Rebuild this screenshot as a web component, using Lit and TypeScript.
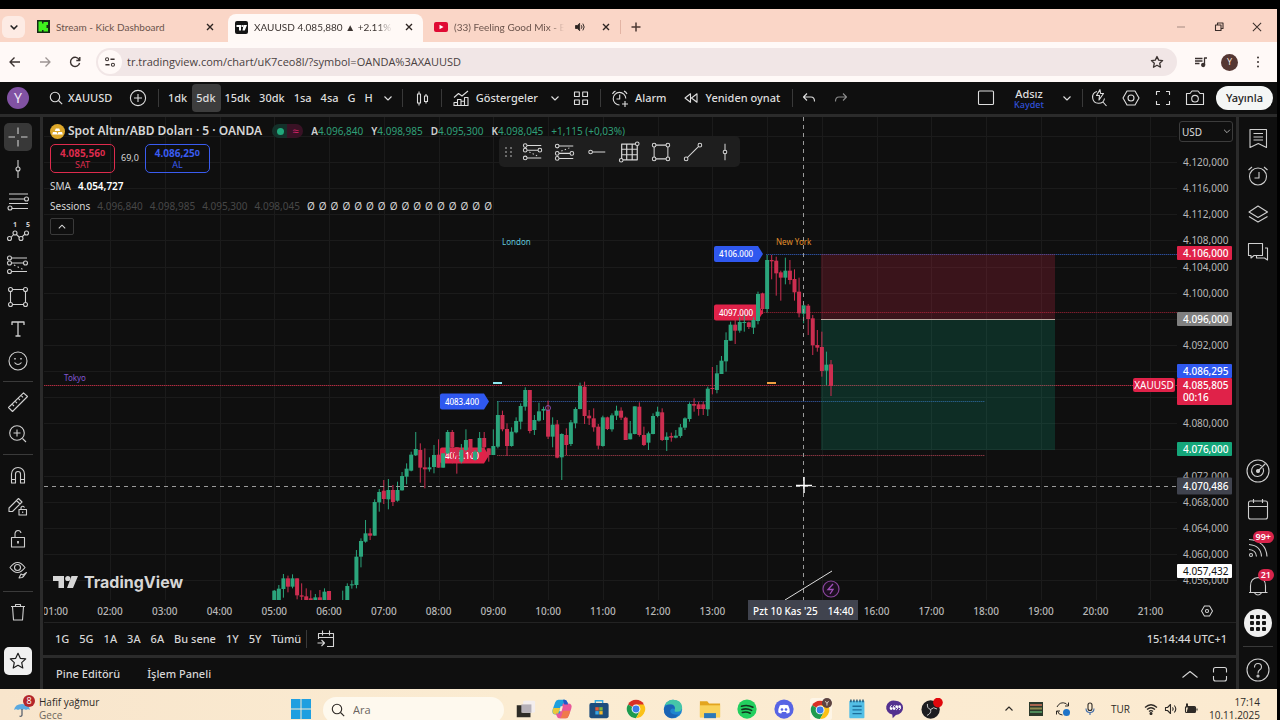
import { LitElement, html, svg, css, nothing } from "lit";
import { customElement } from "lit/decorators.js";
import { classMap } from "lit/directives/class-map.js";
import { styleMap } from "lit/directives/style-map.js";

/* ---------- icons: drawn on a 24px grid ---------- */
const ring = (x: number, y: number, r = 2) => svg`<circle cx=${x} cy=${y} r=${r} fill="var(--knock, #0f0f0f)"/>`;

const icons: Record<string, unknown> = {
  down: svg`<path d="M8.500 10.500 12 14l3.500-3.500"/>`,
  downBold: svg`<path d="M7.500 10 12 14.500l4.500-4.500" stroke-width="2"/>`,
  up: svg`<path d="M8.500 13.500 12 10l3.500 3.500"/>`,
  close: svg`<path d="m8 8 8 8M16 8l-8 8" stroke-width="1.800"/>`,
  closeThin: svg`<path d="m7.500 7.500 9 9M16.500 7.500l-9 9"/>`,
  plus: svg`<path d="M12 7.500v9M7.500 12h9" stroke-width="1.500"/>`,
  minimize: svg`<path d="M8 12h8" opacity=".4"/>`,
  restore: svg`<path d="M8.500 10h5.500v5.500H8.500zM10.500 9.800V8H16v5.500h-1.800"/>`,
  sound: svg`<path d="M6 10v4h2.500l3 3V7l-3 3z" fill="currentColor"/><path d="M13.800 9.700q1.800 2.300 0 4.600M15.800 7.500q3.500 4.500 0 9" stroke-width="1.300"/>`,
  back: svg`<path d="M17 12H7m4.500-4.500L7 12l4.500 4.500" stroke-width="1.400"/>`,
  forward: svg`<path d="M7 12h10m-4.500-4.500L17 12l-4.500 4.500" stroke-width="1.300" opacity=".5"/>`,
  reload: svg`<path d="M16.300 10A4.600 4.600 0 1 0 16.600 13M16.800 7v3.500h-3.500" stroke-width="1.400"/>`,
  site: svg`<circle cx="8.800" cy="9" r="1.700"/><circle cx="15.200" cy="15" r="1.700"/><path d="M12.500 9H17M7 15h4.500" stroke-width="1.400"/>`,
  star: svg`<path d="m12 6.500 1.700 3.600 3.900.5-2.900 2.700.8 3.900-3.500-1.900-3.500 1.900.8-3.900-2.900-2.700 3.900-.5z" stroke-width="1.300"/>`,
  media: svg`<path d="M6 8.500h7.500M6 11h7.500M6 13.500h4.500M15.500 15V8H18" stroke-width="1.300"/><circle cx="14.200" cy="15" r="1.600" fill="currentColor"/>`,
  dots: svg`<g fill="currentColor" stroke="none"><circle cx="12" cy="7.500" r="1"/><circle cx="12" cy="12" r="1"/><circle cx="12" cy="16.500" r="1"/></g>`,
  search: svg`<circle cx="11" cy="11" r="4.700"/><path d="m14.500 14.500 3.700 3.700"/>`,
  addCircle: svg`<circle cx="12" cy="12" r="7.600"/><path d="M12 8v8M8 12h8"/>`,
  candles: svg`<path d="M7.500 8h3v9h-3zM9 5.500V8m0 9v2.500M14.500 10h3v5.500h-3zM16 8v2m0 5.500v2"/>`,
  indicators: svg`<path d="M5 19.500v-3h3.500v3M8.500 19.500v-6H12v6M12 19.500v-4.200h3.500v4.200M15.500 19.500v-8H19v8M4.500 19.500h15M5 11.500l4.500-4 3.500 2.500 6-5"/>`,
  layout: svg`<path d="M5.500 6h4.800v4.500H5.500zM13.700 6h4.800v4.500h-4.800zM5.500 14h4.800v4.500H5.500zM13.700 14h4.800v4.500h-4.800z"/>`,
  alarmAdd: svg`<path d="M17.800 12.500A6.300 6.300 0 1 0 11.500 19M11.700 8.500V13H8.500M4.500 8q.8-2 3-3M16 5q2.200 1 3 3M17 15v6M14 18h6"/>`,
  replay: svg`<path d="M11.500 7.800v8.400L6 12zM18 7.800v8.400L12.500 12z"/>`,
  undo: svg`<path d="M10 7.500 6.500 11l3.500 3.500M6.500 11H14q3.500 0 3.500 4.500"/>`,
  redo: svg`<path d="M14 7.500 17.500 11 14 14.500M17.500 11H10q-3.500 0-3.500 4.500" opacity=".6"/>`,
  square: svg`<rect x="4.500" y="5" width="15" height="13.500" rx="1"/>`,
  quick: svg`<path d="M10 5.500a6 6 0 1 0 7.500 7M15.500 15.500l4 4.500M13 3.500l-3.500 6h3L12 14l4.500-6.500h-3z"/>`,
  gear: svg`<path d="M8 5h8l4 7-4 7H8l-4-7z"/><circle cx="12" cy="12" r="3"/>`,
  gearSmall: svg`<path d="M9.200 6.500h5.600L18 12l-3.200 5.500H9.200L6 12z"/><circle cx="12" cy="12" r="1.700"/>`,
  fullscreen: svg`<path d="M5.500 9V5.500H9M15 5.500h3.500V9M18.500 15v3.500H15M9 18.500H5.500V15"/>`,
  camera: svg`<path d="M3.500 7.500H7l2-2.500h6l2 2.500h3.500v11h-17z"/><circle cx="12" cy="12.700" r="3.300"/>`,
  cross: svg`<path d="M12 2.500V9M12 15v6.500M2.500 12H9M15 12h6.500"/>`,
  vline: svg`<path d="M12 3v18"/>${ring(12, 12)}`,
  hline: svg`<path d="M4 12h17"/>${ring(5, 12)}`,
  fibLines: svg`<path d="M3 5h19M3 10h16M3 14.500h19M5 19.500h17"/>${ring(20.500, 10)}${ring(4, 19)}`,
  elliott: svg`<path d="m4 17.500 5-5.500 5.500 5.500 5.500-5.500"/>${ring(3.500, 17.500)}${ring(9, 12)}${ring(15, 17.500)}${ring(20.500, 12)}`,
  shortPos: svg`<path d="M4 5h17M4 10h15M4 18.500h17"/><path d="m8 12 10 5" stroke-dasharray="1.500 2.500"/>${ring(3.500, 5)}${ring(3.500, 10)}${ring(19.500, 10)}${ring(3.500, 18.500)}`,
  longPos: svg`<path d="M4 5.500h17M4 13.500h15M4 19h17"/><path d="m8 11 10-4" stroke-dasharray="1.500 2.500"/>${ring(3.500, 5.500)}${ring(3.500, 13.500)}${ring(19.500, 13.500)}${ring(3.500, 19)}`,
  rect: svg`<path d="M4.500 4.500h15v15h-15z"/>${ring(4.500, 4.500)}${ring(19.500, 4.500)}${ring(4.500, 19.500)}${ring(19.500, 19.500)}`,
  gridTool: svg`<path d="M4 3.500h17v17H4zM4 9h17M4 15h17M9.500 3.500v17M15.500 3.500v17" stroke-width="1.300"/>${ring(21, 3)}${ring(3.500, 21)}`,
  trend: svg`<path d="m5 19 14-14"/>${ring(4.500, 19.500)}${ring(19.500, 4.500)}`,
  text: svg`<path d="M6 8V5h12v3M12 5v14M9.500 19h5" stroke-width="1.300"/>`,
  smile: svg`<circle cx="12" cy="12" r="9"/><path d="M8.500 13.500q3.500 4 7 0"/><path d="M9 9v1.500M15 9v1.500" stroke-width="1.500"/>`,
  ruler: svg`<path d="M2.500 17.500 17.500 2.800l4 3.700-15 15zM6 14l2 2M9 11.200l2 2M12 8.200l2 2M15 5.300l2 2"/>`,
  zoomIn: svg`<circle cx="11" cy="11" r="7.300"/><path d="M11 7.500v7M7.500 11h7M16.500 16.500 20 20"/>`,
  magnet: svg`<path d="M5.500 20V11a6.500 6.500 0 0 1 13 0v9h-4v-9a2.500 2.500 0 0 0-5 0v9zM5.500 16.500h4M14.500 16.500h4"/>`,
  pencilLock: svg`<path d="M3 16.500V13L12.500 3.500 16 7l-9.500 9.500zM10.500 5.500 14 9"/><path d="M13 14.500h7.500V20H13zM15 14.500v-2q1.700-2.500 3.500 0M16.700 16.500v1.500"/>`,
  lockOpen: svg`<path d="M5.500 10.500h13v9.500h-13zM9 10.500V6.500q.5-3 3-3 2.500 0 3 2.500"/><path d="M12 14v2.500" stroke-width="1.800"/>`,
  eye: svg`<path d="M4 8.500q7.500-10 15 0-7.500 10-15 0z"/><circle cx="11.500" cy="8.500" r="3"/><path d="m13 19 2-4 2 1 3.500-2.500-3 4-1.500 1z"/>`,
  trash: svg`<path d="M5 6.500h14M9.500 6.500v-2h5v2M6.500 6.500 7.500 20h9l1-13.500"/>`,
  starTool: svg`<path d="m12 4.300 2.300 5 5.400.6-4 3.700 1.100 5.400-4.800-2.700L7.200 19l1.100-5.400-4-3.700 5.400-.6z" stroke-width="1.200"/>`,
  watchlist: svg`<path d="M4 3.500h16.500v18l-8.200-4-8.300 4zM7.500 7.500h9.500M7.500 11h9.500M7.500 14h9.500"/>`,
  alarm: svg`<circle cx="12" cy="12.500" r="8.500"/><path d="M13 8v6H8.500M2.500 6 6 3M21.500 6 18 3"/>`,
  layers: svg`<path d="m3 10 9-6 9.500 6-9.500 5.500zM3 14.500l9 5.500 9.500-5.500"/>`,
  chat: svg`<path d="M2.500 3.500h14v12H8l-3 2.500v-2.500H2.500zM19 8h2.500v12l-3-2h-8v-2.500"/>`,
  target: svg`<circle cx="12" cy="12" r="11"/><path d="M15.500 7A6 6 0 1 0 17 9M12 12l7.500-7.500"/><circle cx="12" cy="12" r="1.500" fill="currentColor"/>`,
  calendar: svg`<rect x="2.500" y="4" width="19" height="18" rx="2"/><path d="M2.500 9.500h19M7.500 2v4M16.500 2v4"/>`,
  feed: svg`<circle cx="5" cy="20" r="1.500"/><path d="M3 14.500q7 .5 7.500 7M3 9.500q12 1 12.500 12M3 4.500q17 1.500 18 17"/>`,
  bell: svg`<path d="M3 19.500h18.500M4.500 19v-6q0-8 7.500-8.500 7.500.5 7.500 8.500v6M8.500 20q3.500 4 7 0"/>`,
  help: svg`<circle cx="12" cy="12" r="11"/><path d="M8.500 9.500q0-4 3.500-4t3.500 3.500q0 2-2 3-1.500 1-1.500 3.500"/><circle cx="12" cy="18" r="1"/>`,
  goto: svg`<path d="M4.500 12V6.500h15v13H13M4.500 10.500h15M8.500 3.500v5M15.500 3.500v5M3.500 16h7m-3-3 3 3-3 3"/>`,
  chevUp: svg`<path d="m4.500 15.500 7.500-6 7.500 6"/>`,
  maximize: svg`<path d="M5.500 10.500v-3q0-2 2-2h9q2 0 2 2v3M5.500 14v3q0 2 2 2h9q2 0 2-2v-3"/>`,
  mic: svg`<rect x="10" y="6" width="4" height="7.500" rx="2"/><path d="M8 11.500q0 4 4 4t4-4M12 15.500V18" stroke="#3f6ba8"/>`,
  wifi: svg`<path d="M6 10.500q6-5.500 12 0M8 12.500q4-3.500 8 0M10 14.500q2-1.700 4 0" stroke-width="1.300"/><circle cx="12" cy="16.500" r="1" fill="currentColor"/>`,
  volume: svg`<path d="M6.500 10.500v3h2l3 3v-9l-3 3zM13.500 10.300q1.500 1.700 0 3.400M15.300 8.500q3 3.500 0 7"/>`,
  battery: svg`<rect x="6.500" y="9.500" width="10" height="6" rx="1"/><path d="M9.500 10.500h6v4h-7zM18 11.500v2" fill="currentColor"/><path d="M8 6.500v4" stroke-width="2"/>`,
};

const icon = (name: string, size = 24) => html`<svg
  width=${size} height=${size} viewBox="0 0 24 24" fill="none" stroke="currentColor"
  stroke-width="1.100" stroke-linejoin="round" aria-hidden="true">${icons[name]}</svg>`;

const chromeMark = svg`<circle cx="12" cy="12" r="10" fill="#fff"/>
  <path d="M12 12 3.300 7A10 10 0 0 1 20.700 7z" fill="#d93025"/>
  <path d="M12 12 3.300 7A10 10 0 0 0 12 22l4.500-8z" fill="#1e9b4e"/>
  <path d="M12 22A10 10 0 0 0 20.700 7H12l4.500 7z" fill="#fbc116"/>
  <circle cx="12" cy="12" r="4.800" fill="#fff"/><circle cx="12" cy="12" r="3.800" fill="#3b7de9"/>`;

const apps: { name: string; art: unknown }[] = [
  { name: "Görev görünümü", art: svg`<rect x="10" y="3" width="13" height="13" rx="1.500" fill="#f3eeee"/><path d="M3 8h6v8h9v5H3z" fill="#2d2b26"/><rect x="8" y="7" width="11" height="9" fill="#b5b0b8"/>` },
  { name: "Copilot", art: svg`<path d="M8 2h7q2 0 3 3l.5 2h-4L11 18H5.500Q0 18 2 12l2.500-7Q5.500 2 8 2z" fill="#1ea0dd"/><path d="M2.500 11H10l-2.500 7h-2Q0 18 2.500 11z" fill="#e8c93a"/><path d="M16 22H9q-2 0-3-3l-.5-2h4L13 6h5.500q5.500 0 3.500 6l-2.500 7q-1 3-3.500 3z" fill="#e8589a"/><path d="M13 14h8l-1.500 5q-1 3-3.500 3H9q2 0 3-4z" fill="#f07a4c"/><path d="M13 2h2q2 0 3 3l.5 2h-4z" fill="#2456c8"/><path d="M13 9h-2.500L9 14.500h2.500z" fill="#fbecd2"/>` },
  { name: "Microsoft Store", art: svg`<path d="M8 6V3h8v3" fill="none" stroke="#36a9e0" stroke-width="1.500"/><rect x="1.500" y="5.500" width="21" height="16.500" rx="2" fill="#1d4d7d"/><path d="M8 10h3.700v3.700H8z" fill="#e65b36"/><path d="M12.300 10H16v3.700h-3.700z" fill="#7fb63a"/><path d="M8 14.300h3.700V18H8z" fill="#39a6e6"/><path d="M12.300 14.300H16V18h-3.700z" fill="#f5b92c"/>` },
  { name: "Chrome", art: chromeMark },
  { name: "Edge", art: svg`<circle cx="12" cy="12" r="10" fill="#1f85cf"/><path d="M3 8Q6 2 12 2q9 0 10 8 0 5-6 5-3 0-2-2 1-6-4-6-5 0-7 1z" fill="#45c6a8"/><path d="M2 12q1-5 7-5 5 0 5 5-4-2-5 2 0 5 9 4-3 4-8 4-8-1-8-10z" fill="#1a64b5"/>` },
  { name: "Dosya Gezgini", art: svg`<path d="M1 3.500h8l2 2.500h12v15H1z" fill="#e3a51f"/><path d="M1 8h22v13H1z" fill="#f9d25a"/><path d="M5.500 16.500h13V22h-13z" fill="#2a78b8"/>` },
  { name: "Spotify", art: svg`<circle cx="12" cy="12" r="10.500" fill="#23cf5f"/><g fill="none" stroke="#12351f" stroke-width="1.800" stroke-linecap="round"><path d="M6 9q6.500-2 12.500 1M6.500 12.500q5.500-1.500 10.500 1M7 15.800q4.500-1.300 8.500.8"/></g>` },
  { name: "Discord", art: svg`<circle cx="12" cy="12" r="10.500" fill="#5764e4"/><path d="M7.500 8q4.500-1.500 9 0 2 4 1.800 7.500-1.600 1.300-3.300 1.300l-.8-1.500h-4.400L9 16.800q-1.700 0-3.300-1.300Q5.500 12 7.500 8z" fill="#fff"/><circle cx="9.800" cy="12.500" r="1.400" fill="#5764e4"/><circle cx="14.200" cy="12.500" r="1.400" fill="#5764e4"/>` },
  { name: "Chrome profili", art: svg`<rect x="0" y="0" width="24" height="24" rx="3" fill="#fffaf0" opacity=".7"/><g transform="translate(-1 1)">${chromeMark}</g><circle cx="18.500" cy="5.500" r="5.500" fill="#5d4340"/><path d="m16.800 3.500 1.700 2.500 1.700-2.500M18.500 6v2.300" stroke="#e8d8d0" fill="none"/>` },
  { name: "Not Defteri", art: svg`<rect x="2.500" y="3" width="16.500" height="19" rx="1" fill="#53bfe6"/><path d="M3.500 3h15" stroke="#1e4f6e" stroke-width="3" stroke-dasharray="1.500 1.800"/><path d="M6 9h10M6 13h10M6 17h10" stroke="#1c6f9c" stroke-width="1.400"/>` },
  { name: "Sohbet", art: svg`<path d="M12 3a8 7.500 0 0 1 1 15.500L9.500 22l-.5-4A8 7.500 0 0 1 12 3z" fill="#53308f"/><g fill="#fff"><circle cx="7.800" cy="11.500" r="1.500"/><circle cx="11" cy="11.500" r="1.500"/><circle cx="13.800" cy="9.500" r="1.500"/><circle cx="17" cy="9.500" r="1.500"/></g><path d="M6.700 11q0-2.500 1.800-3M9.900 11q0-2.500 1.800-3M15 10q0 2.500-1.800 3M18.200 10q0 2.500-1.800 3" stroke="#fff" fill="none"/>` },
  { name: "OBS", art: svg`<circle cx="10.500" cy="12.500" r="10" fill="#1d1d20"/><g fill="none" stroke="#d6d6d6" stroke-width="1"><path d="M10.500 12.500q-4-1-3.500-6M10.500 12.500q3-3.500 7-.5M10.500 12.500q1 4.500-4 6.500"/></g><circle cx="18.500" cy="5" r="5.300" fill="#e0080d"/>` },
];

/* ---------- market data ---------- */
const PLOT_W = 1133;
const PLOT_H = 483;
const priceY = (p: number) => 45 + (4120 - p) * 6.533;
const hourX = (h: number) => 66 + (h - 2) * 54.76;

/* One row per 5 minute bar: slot after 05:00, high, open/close top, open/close bottom, low, rising. */
type Bar = [number, number, number, number, number, 0 | 1];
const morning: Bar[] = [
  [0, 660, 662, 690, 690, 1], [1, 645, 656, 692, 692, 1], [2, 612, 625, 657, 683, 1], [3, 617, 625, 650, 667, 0],
  [4, 613, 625, 650, 655, 1], [5, 625, 625, 676, 688, 0], [6, 640, 676, 680, 690, 0], [7, 655, 679, 692, 692, 0],
  [8, 661, 685, 692, 692, 0], [9, 672, 682, 692, 692, 1], [10, 660, 682, 692, 692, 0], [11, 655, 665, 692, 692, 1],
  [12, 663, 663, 692, 692, 0], [15, 662, 690, 692, 692, 1], [16, 640, 648, 692, 692, 1], [17, 631, 643, 646, 656, 1],
  [18, 540, 560, 645, 655, 1], [19, 505, 513, 560, 592, 1], [20, 450, 490, 515, 518, 1], [21, 475, 490, 497, 510, 0],
  [22, 388, 396, 497, 497, 1], [23, 357, 366, 397, 425, 1], [24, 330, 362, 387, 402, 0], [25, 327, 360, 388, 418, 1],
  [26, 345, 360, 396, 408, 0], [27, 335, 360, 392, 395, 1], [28, 306, 318, 361, 362, 1], [29, 280, 296, 320, 343, 1],
  [30, 245, 254, 302, 304, 1], [31, 186, 237, 256, 258, 1], [32, 220, 240, 293, 338, 0], [33, 235, 292, 298, 355, 0],
  [34, 262, 292, 298, 305, 1], [35, 225, 255, 291, 310, 1], [36, 208, 254, 293, 293, 0], [37, 250, 250, 293, 293, 1],
  [38, 180, 186, 250, 252, 1], [39, 180, 186, 232, 280, 0], [40, 232, 232, 256, 311, 0], [41, 222, 240, 275, 280, 1],
  [42, 178, 210, 240, 245, 1], [43, 207, 207, 250, 256, 0], [44, 240, 245, 270, 272, 1], [45, 186, 204, 246, 250, 1],
  [46, 186, 204, 232, 240, 0], [47, 235, 235, 255, 275, 0], [48, 178, 228, 255, 255, 1], [49, 93, 135, 230, 235, 1],
  [50, 122, 135, 178, 184, 0], [51, 160, 177, 228, 258, 0], [52, 172, 185, 228, 230, 1], [53, 142, 153, 187, 190, 1],
  [54, 100, 108, 155, 178, 1], [55, 52, 60, 110, 122, 1], [56, 60, 60, 183, 190, 0], [57, 135, 150, 180, 195, 1],
  [58, 98, 124, 152, 155, 1], [59, 110, 117, 122, 150, 1], [60, 92, 120, 200, 207, 0], [61, 142, 164, 200, 232, 1],
  [62, 150, 163, 263, 265, 0], [63, 190, 192, 262, 330, 1], [64, 175, 195, 225, 255, 0], [65, 150, 157, 222, 228, 1],
  [66, 112, 117, 160, 175, 1], [67, 38, 48, 117, 118, 1], [68, 35, 50, 138, 162, 0], [69, 120, 137, 145, 165, 0],
  [70, 115, 145, 172, 185, 0], [71, 162, 170, 227, 238, 0], [72, 137, 142, 228, 230, 1], [73, 140, 142, 177, 180, 0],
  [74, 130, 136, 178, 185, 1], [75, 107, 122, 137, 150, 1], [76, 112, 122, 143, 150, 0], [77, 140, 143, 210, 210, 0],
  [78, 153, 190, 208, 208, 1], [79, 109, 109, 192, 193, 1], [80, 97, 110, 195, 200, 0], [81, 170, 195, 225, 228, 0],
  [82, 185, 190, 218, 240, 1], [83, 130, 138, 192, 193, 1], [84, 110, 125, 138, 142, 1], [85, 115, 127, 210, 213, 0],
  [86, 187, 200, 210, 243, 1], [87, 188, 198, 203, 215, 0], [88, 180, 197, 203, 205, 1], [89, 162, 172, 198, 203, 1],
  [90, 142, 145, 173, 180, 1], [91, 97, 102, 147, 155, 1], [92, 85, 102, 107, 125, 0], [93, 95, 103, 117, 137, 0],
  [94, 95, 103, 117, 135, 0], [95, 50, 56, 118, 138, 1],
];
const afternoon: Bar[] = [
  [96, 411, 474, 477, 493, 0], [97, 405, 430, 480, 490, 1], [98, 378, 392, 432, 432, 1], [99, 307, 330, 394, 425, 1],
  [100, 275, 284, 332, 332, 1], [101, 270, 284, 302, 342, 0], [102, 262, 276, 302, 308, 1], [103, 255, 276, 279, 305, 1],
  [104, 275, 277, 291, 297, 0], [105, 262, 270, 293, 312, 1], [106, 185, 192, 273, 283, 1], [107, 188, 190, 237, 252, 0],
  [108, 75, 90, 237, 248, 1], [109, 75, 90, 94, 148, 0], [110, 80, 92, 130, 197, 0], [111, 122, 127, 143, 212, 0],
  [112, 83, 122, 143, 163, 1], [113, 90, 122, 150, 163, 0], [114, 118, 147, 187, 212, 0], [115, 143, 185, 250, 262, 0],
  [116, 222, 226, 251, 280, 1], [117, 222, 227, 267, 315, 0], [118, 255, 265, 346, 375, 0], [119, 300, 345, 353, 365, 0],
  [120, 305, 351, 423, 440, 0], [121, 365, 404, 422, 465, 1], [122, 390, 403, 468, 498, 0],
];
const drawBars = (bars: Bar[], base: number) =>
  bars.map(([slot, high, top, bottom, low, rising]) => {
    const x = hourX(5 + slot / 12);
    const y = (v: number) => (v + base) / 3;
    const fill = rising ? "#2ba57c" : "#cc2e50";
    return svg`<path d="M${x} ${y(high)}V${y(low)}" stroke=${fill}/>
      <rect x=${x - 2} y=${y(top)} width="4" height=${Math.max(1, (bottom - top) / 3)} fill=${fill}/>`;
  });

const axisPrices = [4120, 4116, 4112, 4108, 4104, 4100, 4092, 4080, 4072, 4068, 4064, 4060, 4056];
const tags: { price: number; text: string; kind: string; note?: string }[] = [
  { price: 4106, text: "4.106,000", kind: "red" },
  { price: 4096, text: "4.096,000", kind: "gray" },
  { price: 4088, text: "4.086,295", kind: "blue" },
  { price: 4085.8, text: "4.085,805", kind: "red last", note: "00:16" },
  { price: 4076, text: "4.076,000", kind: "green" },
  { price: 4070.4, text: "4.070,486", kind: "slate" },
  { price: 4057.4, text: "4.057,432", kind: "white" },
];
const hours = [1, 2, 3, 4, 5, 6, 7, 8, 9, 10, 11, 12, 13, 16, 17, 18, 19, 20, 21];
const fmt = (p: number) => `${Math.floor(p / 1000)}.${String(p % 1000).padStart(3, "0")},000`;

@customElement("app-root")
export class AppRoot extends LitElement {
  static styles = css`
    :host { display: flex; flex-direction: column; height: 100vh; box-sizing: border-box; overflow: hidden;
      padding: 9px 3px 0 0; background: #000; color: #d6d6d6; font: 11px/16px "Noto Sans", sans-serif; }
    * { box-sizing: border-box; }
    svg { display: block; flex: none; }
    button { font: inherit; color: inherit; background: none; border: 0; padding: 0; margin: 0; display: flex;
      align-items: center; justify-content: center; flex: none; white-space: nowrap; }
    input, select { font: inherit; color: inherit; border: 0; background: none; padding: 0; margin: 0; min-width: 0; outline: 0; }
    .grow { flex: 1; }

    .tabs { display: flex; align-items: center; flex: none; height: 33px; padding: 2px 1px 0 2px; background: #fad6c7; color: #4b3933;
      font: 10px/16px Lato, sans-serif; }
    .tabmenu { width: 23px; height: 22px; border-radius: 6px; background: #fdebe4; color: #222; }
    .tab { display: flex; align-items: center; gap: 6px; width: 198px; height: 31px; padding: 0 4px 0 11px; color: #6b544c; }
    .tab .title { flex: 1; overflow: hidden; white-space: nowrap; }
    .tab .fade { -webkit-mask-image: linear-gradient(90deg, #000 88%, transparent); mask-image: linear-gradient(90deg, #000 88%, transparent); }
    .tab.first { margin-left: 1px; }
    .tab.active { width: 195px; align-self: flex-end; height: 28px; padding-bottom: 2px; margin-left: 4px; padding-left: 7px; border-radius: 8px 8px 0 0; background: #fff9f6; color: #3c3431; }
    .tab.video { width: 197px; }
    .tab button { width: 20px; height: 20px; color: #2d2421; }
    .tabsep { width: 1px; height: 14px; background: #e3b4a4; margin-right: 3px; }
    .win { width: 38px; height: 24px; color: #3a2e2a; }
    .addr { display: flex; align-items: center; flex: none; height: 40px; padding: 0 7px 0 0; background: #fff9f7; color: #3b3230; }
    .addr .nav { width: 30px; height: 28px; }
    .url { display: flex; align-items: center; flex: 1; height: 28px; margin: 0 12px 0 6px; padding: 0 8px 0 2px; border-radius: 14px; background: #f1e6e6; }
    .url .chip { width: 24px; height: 24px; border-radius: 12px; background: #fff9f7; margin-right: 5px; }
    .url input { flex: 1; font: 11px/16px "Open Sans", sans-serif; color: #4a3f3f; }
    .me { width: 17px; height: 17px; border-radius: 9px; background: #553733; color: #f3e4df; font-size: 9px; margin: 0 8px; }

    .top { display: flex; align-items: center; flex: none; height: 32px; padding: 0 4px 0 7px; background: #0f0f0f; font-weight: 500; color: #dedede; }
    .avatar { width: 22px; height: 22px; border-radius: 11px; background: #8152a3; color: #f2e9f7; font-size: 14px; font-weight: 400; margin-right: 15px; }
    .sep { width: 1px; height: 18px; background: #393939; flex: none; }
    .sym { width: 68px; justify-content: flex-start; margin-right: 12px; }
    .plus { width: 28px; margin-right: 6px; }
    .int { height: 28px; padding: 0 5px 0 4px; border-radius: 4px; }
    .int.on { background: #3d3d3d; }
    .ints { display: flex; margin-left: 5px; }
    .arrow { width: 20px; overflow: hidden; margin-right: 4px; }
    .type { width: 38px; }
    .labelled { gap: 3px; margin-left: 7px; }
    .labelled.next { margin-left: 12px; margin-right: 12px; }
    .arrow.ind { margin: 0 2px 0 7px; }
    .tpl { width: 28px; margin-right: 5px; }
    .hist { width: 32px; }
    .wide { width: 32px; height: 28px; }
    .layoutname { display: flex; flex-direction: column; align-items: center; margin: 0 11px 0 16px; line-height: 12px; }
    .save { color: #3151d8; font-size: 9px; line-height: 9px; }
    .more { margin-right: 3px; }
    .publish { height: 24px; padding: 0 10px; border-radius: 12px; background: #f4f6f5; color: #222; margin-left: 5px; }

    .body { display: grid; grid-template-columns: 40px minmax(0, 1fr) 38px; column-gap: 3px; flex: 1; min-height: 0; padding-top: 3px; background: #2b2b2b; }
    .rail { display: flex; flex-direction: column; align-items: center; background: #0f0f0f; min-height: 0; color: #cfcfcf; }
    .tools { padding: 4px 4px 14px 0; }
    .tool { position: relative; width: 28px; height: 32px; flex: none; }
    .tool.on { background: #383838; border-radius: 5px; height: 28px; margin: 2px 0; }
    .wave { position: absolute; top: 3px; font-size: 7px; line-height: 9px; font-weight: 700; }
    .wave.one { left: 9px; } .wave.five { right: 2px; }
    .rule { width: 30px; height: 1px; margin: 4px 0; background: #3a3a3a; flex: none; }
    .fav { width: 28px; height: 28px; border-radius: 5px; background: #f0f0f0; color: #1b1b1b; margin-top: auto; }
    .side { padding-top: 2px; }
    .side .tool { height: 38px; width: 38px; }
    .badge { position: absolute; right: 3px; top: 3px; height: 12px; padding: 0 3px; border-radius: 6px; background: #d8244b; color: #fff; font-size: 9px; line-height: 12px; font-weight: 600; }
    .gridbtn { width: 28px; height: 28px; border-radius: 14px; background: #f0f0f0; color: #151515; display: flex; align-items: center; justify-content: center; }

    .center { display: flex; flex-direction: column; gap: 3px; min-width: 0; min-height: 0; }
    .chart { display: grid; grid-template-columns: minmax(0, 1fr) 59px; grid-template-rows: minmax(0, 1fr) 23px 32px; flex: 1; min-height: 0; background: #0f0f0f; padding-left: 1px; }
    .plot { position: relative; overflow: hidden; }
    .canvas { position: absolute; inset: 0; width: 100%; height: 100%; }
    .legend { position: relative; display: flex; flex-direction: column; align-items: flex-start; padding: 6px 0 0 6px; white-space: nowrap; }
    .row { display: flex; align-items: center; height: 16px; }
    .gold { width: 15px; height: 15px; margin-right: 3px; }
    .name { font-size: 12px; font-weight: 600; color: #d6d6d6; }
    .status { display: flex; align-items: center; justify-content: space-around; width: 31px; height: 14px; margin: 0 8px 0 10px; border-radius: 7px; background: linear-gradient(90deg, #14312a 50%, #391225 50%); color: #d8246a; font-size: 11px; }
    .dot { width: 7px; height: 7px; border-radius: 4px; background: #21a87b; }
    .ohlc { display: flex; gap: 8px; font-size: 10px; color: #2f9f78; }
    .ohlc b { color: #d0d0d0; font-weight: 600; }
    .quote { gap: 6px; height: 30px; margin-top: 4px; font-size: 9px; }
    .deal { flex-direction: column; width: 65px; height: 29px; border: 1px solid; border-radius: 5px; line-height: 11px; }
    .deal b { font-size: 10px; line-height: 12px; } .deal sup { font-size: 9px; line-height: 0; vertical-align: 1px; }
    .sell { color: #dd2b4d; } .buy { color: #3a5cf0; }
    .sma { margin-top: 5px; gap: 7px; font-size: 10px; } .sma b { color: #fff; font-weight: 600; }
    .sess { margin-top: 4px; gap: 7px; font-size: 10px; }
    .dim { display: flex; gap: 7px; color: #474747; }
    .empty { display: flex; gap: 4px; }
    .fold { width: 24px; height: 17px; margin-top: 4px; border: 1px solid #3a3a3a; border-radius: 2px; }
    .float { position: absolute; left: 455px; top: 19px; display: flex; align-items: center; width: 241px; height: 31px; padding-left: 3px; border-radius: 5px; background: #1e1e1e; --knock: #1e1e1e; }
    .float button { width: 32px; height: 30px; color: #d8d8d8; }
    .float .grip { width: 14px; margin-right: 1px; color: #6a6a6a; }
    .mark { position: absolute; left: 9px; bottom: 8px; display: flex; align-items: center; gap: 6px; font: 700 16px/20px Inter, sans-serif; color: #d6d6d6; }
    .note { font: 8px "Noto Sans", sans-serif; }
    .flag { font: 500 8px "Noto Sans", sans-serif; fill: #fff; }

    .prices { position: relative; overflow: hidden; font-size: 10px; color: #b8b8b8; }
    .prices .p, .tag { position: absolute; left: 0; width: 55px; padding: 0 4px 0 6px; height: 14px; line-height: 14px; transform: translateY(-50%); }
    .tag { color: #fff; font-weight: 500; border-radius: 1px; }
    .tag.red { background: #e02249; } .tag.gray { background: #808080; } .tag.blue { background: #2f58ef; }
    .tag.green { background: #15a67a; } .tag.slate { background: #40434e; height: 17px; line-height: 17px; } .tag.white { background: #fff; color: #111; font-weight: 400; }
    .tag.last { height: 27px; line-height: 12px; padding-top: 1px; transform: translateY(-7px); }
    .ticker { position: absolute; right: 2px; width: 42px; height: 14px; line-height: 14px; border-radius: 2px; background: #e02249; color: #fff; font-size: 10px; text-align: center; transform: translateY(-50%); }
    .cur { position: absolute; left: 2px; top: 4px; width: 54px; height: 21px; }
    .cur select { width: 100%; height: 100%; appearance: none; border: 1px solid #3c3c3c; border-radius: 3px; background: #0f0f0f; padding-left: 2px; color: #ddd; }
    .cur svg { position: absolute; right: -4px; top: 0; pointer-events: none; }
    .times { position: relative; overflow: hidden; border-bottom: 1px solid #232323; font-weight: 500; color: #b8b8b8; font-size: 10px; }
    .times .t { position: absolute; top: 4px; transform: translateX(-50%); line-height: 15px; }
    .times .now { position: absolute; top: 0; width: 110px; height: 20px; line-height: 22px; transform: translateX(-50%); background: #40434e; color: #fff; display: flex; justify-content: center; gap: 10px; white-space: nowrap; }
    .corner { display: flex; align-items: center; justify-content: center; border-bottom: 1px solid #232323; }
    .ranges { grid-column: 1 / -1; display: flex; align-items: center; padding: 0 9px 0 6px; font-weight: 500; }
    .ranges button { padding: 0 5px; }
    .ranges .sep { margin: 0 2px 0 0; }
    .panel { display: flex; align-items: center; flex: none; height: 31px; padding: 0 4px 0 13px; background: #0f0f0f; font-weight: 500; gap: 27px; }
    .panel .ends { display: flex; gap: 6px; }

    .task { display: flex; align-items: flex-start; flex: none; height: 31px; overflow: hidden; background: linear-gradient(90deg, #f8e5cc, #fbecd2 40%, #fbead0); color: #2e2a26; font: 10px/14px "Open Sans", sans-serif; }
    .bar { display: flex; align-items: center; width: 100%; height: 40px; }
    .weather { position: relative; gap: 7px; padding-left: 12px; width: 291px; justify-content: flex-start; text-align: left; line-height: 13px; }
    .weather .count { position: absolute; left: 23px; top: -1px; width: 12px; height: 12px; line-height: 12px; border-radius: 6px; text-align: center; background: #b3262a; color: #fff; font-size: 9px; }
    .weather small { display: block; font-size: 10px; color: #6d655c; }
    .find { display: flex; align-items: center; width: 181px; height: 26px; margin: 2px 2px 0 12px; padding-left: 3px; border-radius: 13px; background: #fef9ee; gap: 3px; }
    .find input { width: 120px; font-size: 11px; } .find input::placeholder { color: #6b655e; opacity: 1; }
    .app { width: 37px; height: 30px; }
    .apps { display: flex; }
    .tray { width: 27px; height: 30px; } .tray.slim { width: 20px; }
    .lang { padding: 0 11px 0 8px; }
    .clock { text-align: right; padding: 0 17px 0 8px; line-height: 13px; }
  `;

  private chromeRows() {
    return html`
      <nav class="tabs" aria-label="Sekmeler">
        <button class="tabmenu" aria-label="Sekme ara">${icon("downBold", 18)}</button>
        <div class="tab first">
          <svg width="13" height="13" viewBox="0 0 13 13"><path d="M0 0h13v13H0z" fill="#162916"/><path d="M1.500 1.500H5v2h1.500V2h4.500v3H9.500v3H11v3.500H6.500V10H5v1.500H1.500z" fill="#3ff01e"/></svg>
          <span class="title">Stream - Kick Dashboard</span>
          <button aria-label="Kapat">${icon("close", 18)}</button>
        </div>
        <div class="tab active">
          <svg width="13" height="13" viewBox="0 0 13 13"><rect width="13" height="13" rx="2" fill="#151515"/><path d="M1.500 4H6v5.500H4V6H1.500zM8.500 4H12L9.800 9.500H7.500z" fill="#fff"/><circle cx="7.300" cy="5" r="1" fill="#fff"/></svg>
          <span class="title fade">XAUUSD 4.085,880 ▲ +2.11% Adsız</span>
          <button aria-label="Kapat">${icon("close", 18)}</button>
        </div>
        <div class="tab video">
          <svg width="14" height="12" viewBox="0 0 14 12"><rect y="1" width="14" height="10" rx="2" fill="#e00b33"/><path d="m5.500 3.800 4 2.200-4 2.200z" fill="#fff"/></svg>
          <span class="title fade">(33) Feeling Good Mix - Emotional</span>
          <button aria-label="Sesi kapat">${icon("sound", 18)}</button>
          <button aria-label="Kapat">${icon("close", 18)}</button>
        </div>
        <span class="tabsep"></span>
        <button aria-label="Yeni sekme">${icon("plus")}</button>
        <span class="grow"></span>
        <button class="win" aria-label="Küçült">${icon("minimize")}</button>
        <button class="win" aria-label="Geri yükle">${icon("restore")}</button>
        <button class="win" aria-label="Pencereyi kapat">${icon("closeThin", 22)}</button>
      </nav>
      <div class="addr">
        <button class="nav" aria-label="Geri">${icon("back")}</button>
        <button class="nav" aria-label="İleri">${icon("forward")}</button>
        <button class="nav" aria-label="Yenile">${icon("reload")}</button>
        <div class="url">
          <button class="chip" aria-label="Site bilgileri">${icon("site", 22)}</button>
          <input aria-label="Adres" .value=${"tr.tradingview.com/chart/uK7ceo8l/?symbol=OANDA%3AXAUUSD"} />
          <button aria-label="Yer işareti">${icon("star")}</button>
        </div>
        <button aria-label="Medya">${icon("media")}</button>
        <button class="me" aria-label="Profil">Y</button>
        <button aria-label="Menü">${icon("dots")}</button>
      </div>`;
  }

  private header() {
    const ints = ["1dk", "5dk", "15dk", "30dk", "1sa", "4sa", "G", "H"];
    return html`<header class="top">
      <button class="avatar" aria-label="Kullanıcı menüsü">Y</button>
      <button class="sym">${icon("search")}XAUUSD</button>
      <button class="plus" aria-label="Karşılaştır">${icon("addCircle")}</button>
      <span class="sep"></span>
      <div class="ints">${ints.map((t) => html`<button class=${classMap({ int: true, on: t === "5dk" })}>${t}</button>`)}</div>
      <button class="arrow" aria-label="Aralıklar">${icon("down")}</button>
      <span class="sep"></span>
      <button class="type" aria-label="Mumlar">${icon("candles")}</button>
      <span class="sep"></span>
      <button class="labelled">${icon("indicators")}Göstergeler</button>
      <button class="arrow ind" aria-label="Favori göstergeler">${icon("down")}</button>
      <button class="tpl" aria-label="Şablonlar">${icon("layout")}</button>
      <span class="sep"></span>
      <button class="labelled">${icon("alarmAdd")}Alarm</button>
      <button class="labelled next">${icon("replay")}Yeniden oynat</button>
      <span class="sep"></span>
      <button class="hist" aria-label="Geri al">${icon("undo")}</button>
      <button class="hist" aria-label="Yinele">${icon("redo")}</button>
      <span class="grow"></span>
      <button aria-label="Düzen">${icon("square")}</button>
      <button class="layoutname"><span>Adsız</span><span class="save">Kaydet</span></button>
      <button class="more" aria-label="Düzenler">${icon("down")}</button>
      <span class="sep"></span>
      <button class="wide" aria-label="Hızlı arama">${icon("quick")}</button>
      <button class="wide" aria-label="Ayarlar">${icon("gear")}</button>
      <button class="wide" aria-label="Tam ekran">${icon("fullscreen")}</button>
      <button class="wide" aria-label="Anlık görüntü">${icon("camera")}</button>
      <button class="publish">Yayınla</button>
    </header>`;
  }

  private toolRail() {
    const groups = [
      ["cross", "vline", "fibLines", "elliott", "shortPos", "rect", "text", "smile"],
      ["ruler", "zoomIn"],
      ["magnet", "pencilLock", "lockOpen", "eye"],
      ["trash"],
    ];
    return html`<aside class="rail tools" aria-label="Çizim araçları">
      ${groups.map((g, i) => html`${i ? html`<span class="rule"></span>` : nothing}
        ${g.map((n) => html`<button class=${classMap({ tool: true, on: n === "cross" })} aria-label=${n}>
          ${icon(n)}${n === "elliott" ? html`<span class="wave one">1</span><span class="wave five">5</span>` : nothing}
        </button>`)}`)}
      <button class="fav" aria-label="Favoriler">${icon("starTool")}</button>
    </aside>`;
  }

  private sideRail() {
    const item = (n: string, badge = "") => html`<button class="tool" aria-label=${n}>${icon(n)}${badge ? html`<span class="badge">${badge}</span>` : nothing}</button>`;
    return html`<aside class="rail side" aria-label="Paneller">
      ${["watchlist", "alarm", "layers", "chat"].map((n) => item(n))}
      <span class="grow"></span>
      ${item("target")}${item("calendar")}${item("feed", "99+")}${item("bell", "21")}
      <button class="tool" aria-label="Ürünler"><span class="gridbtn">
        <svg width="16" height="16" viewBox="0 0 16 16" fill="currentColor">${[0, 6, 12].map((x) => [0, 6, 12].map((y) => svg`<rect x=${x} y=${y} width="4" height="4" rx="1"/>`))}</svg>
      </span></button>
      <span class="rule"></span>
      ${item("help")}
    </aside>`;
  }

  private flag(x: number, y: number, text: string, fill: string) {
    return svg`<path d="M${x + 2} ${y - 8}h42l5 8-5 8h-42q-2 0-2-2v-12q0-2 2-2z" fill=${fill}/>
      <text class="flag" x=${x + 22} y=${y + 3} text-anchor="middle">${text}</text>`;
  }

  private canvas() {
    const gridH = Array.from({ length: 19 }, (_, i) => priceY(4124 - i * 4));
    const gridV = Array.from({ length: 20 }, (_, i) => hourX(2 + i));
    const dotted = (x1: number, x2: number, y: number, c: string) =>
      svg`<path d="M${x1} ${y}H${x2}" stroke=${c} stroke-opacity=".4"/>
        <path d="M${x1} ${y}H${x2}" stroke=${c} stroke-dasharray="1 1"/>`;
    return html`<svg class="canvas" viewBox="0 0 ${PLOT_W} ${PLOT_H}" preserveAspectRatio="xMaxYMin slice" role="img" aria-label="XAUUSD 5 dakikalık grafik">
      <g stroke="#1b1b1b">
        ${gridH.map((y) => svg`<path d="M0 ${Math.round(y) + 0.5}H${PLOT_W}"/>`)}
        ${gridV.map((x) => svg`<path d="M${Math.round(x) + 0.5} 0V${PLOT_H}"/>`)}
      </g>
      ${this.flag(670, 137, "4106.000", "#2f58ef")}
      ${this.flag(670, 195.5, "4097.000", "#e02249")}
      ${this.flag(396, 284.5, "4083.400", "#2f58ef")}
      ${this.flag(396, 338.5, "4075.100", "#e02249")}
      ${dotted(722, PLOT_W, 137.5, "#2a4c98")}
      ${dotted(718, PLOT_W, 195.5, "#7a1c2b")}
      ${dotted(0, PLOT_W, 268.5, "#b02c40")}
      ${dotted(453, 941, 284.5, "#2c4a88")}
      ${dotted(453, 941, 338.5, "#85333f")}
      <rect x="777" y="137" width="234" height="65" fill="#e8274a" fill-opacity=".2"/>
      <rect x="777" y="203" width="234" height="130" fill="#0f9a78" fill-opacity=".22"/>
      <path d="M777 202.500h234" stroke="#b9a9a0"/>
      ${drawBars(morning, 759)}${drawBars(afternoon, 339)}
      <path d="M449 266h9" stroke="#8ce8f0" stroke-width="2"/>
      <path d="M723 266h9" stroke="#f0a040" stroke-width="2"/>
      <circle cx="504" cy="291" r="2.500" fill="none" stroke="#8b4aa8"/>
      <text class="note" x="458" y="128" fill="#62c6d8">London</text>
      <text class="note" x="732" y="128" fill="#e0902c">New York</text>
      <text class="note" x="20" y="264" fill="#8256d0">Tokyo</text>
      <path d="M741 483l47-29" stroke="#ddd"/>
      <circle cx="787" cy="472" r="8" fill="#1c0f20" stroke="#87449a" stroke-width="1.200"/>
      <path d="m789 467-5 5.500h5l-3 4.500" fill="none" stroke="#a04fb8" stroke-width="1.300"/>
      <path d="M759.500 0V483M0 369.500H${PLOT_W}" stroke="#9a9a9a" stroke-dasharray="4 4"/>
      <path d="M752 368.500h16M760 360v16" stroke="#fff" stroke-width="1.500"/>
    </svg>`;
  }

  private chart() {
    const ohlc = [["A", "4.096,840"], ["Y", "4.098,985"], ["D", "4.095,300"], ["K", "4.098,045"]];
    return html`<section class="chart">
      <div class="plot">
        ${this.canvas()}
        <div class="legend">
          <div class="row">
            <svg class="gold" viewBox="0 0 15 15"><circle cx="7.500" cy="7.500" r="7.500" fill="#dca72a"/><path d="m5.800 4.500h3.400l1 2.500H4.800zM3 8h3.600l1 2.500H2.200zM8.400 8H12l.8 2.500H7.400z" fill="#fff"/></svg>
            <span class="name">Spot Altın/ABD Doları · 5 · OANDA</span>
            <span class="status"><span class="dot"></span>≈</span>
            <span class="ohlc">${ohlc.map(([k, v]) => html`<span><b>${k}</b>${v}</span>`)}<span>+1,115 (+0,03%)</span></span>
          </div>
          <div class="row quote">
            <button class="deal sell"><b>4.085,56<sup>0</sup></b>SAT</button><span>69,0</span>
            <button class="deal buy"><b>4.086,25<sup>0</sup></b>AL</button>
          </div>
          <div class="row sma"><span>SMA</span><b>4.054,727</b></div>
          <div class="row sess"><span>Sessions</span>
            <span class="dim">${ohlc.map(([, v]) => html`<span>${v}</span>`)}</span>
            <span class="empty">${Array.from({ length: 16 }, () => html`<span>Ø</span>`)}</span>
          </div>
          <button class="fold" aria-label="Göstergeleri gizle">${icon("up", 22)}</button>
        </div>
        <div class="float" role="toolbar" aria-label="Favori çizimler">
          <button class="grip" aria-label="Taşı"><svg width="8" height="12" viewBox="0 0 8 12" fill="currentColor">${[0, 5].map((x) => [0, 4, 8].map((y) => svg`<rect x=${x} y=${y + 1} width="2" height="2"/>`))}</svg></button>
          ${["shortPos", "longPos", "hline", "gridTool", "rect", "trend", "vline"].map((n) => html`<button aria-label=${n}>${icon(n, 22)}</button>`)}
        </div>
        <div class="mark">
          <svg width="25" height="14" viewBox="0 0 25 14" fill="currentColor"><path d="M0 1h11v12H5.500V6H0zM18.500 1H25l-5 12h-6z"/><circle cx="14.800" cy="3.500" r="2.600"/></svg>
          TradingView
        </div>
        <span class="ticker" style=${styleMap({ top: `${priceY(4085.8)}px` })}>XAUUSD</span>
      </div>
      <div class="prices">
        ${axisPrices.map((p) => html`<span class="p" style=${styleMap({ top: `${priceY(p)}px` })}>${fmt(p)}</span>`)}
        ${tags.map((t) => html`<span class="tag ${t.kind}" style=${styleMap({ top: `${priceY(t.price)}px` })}>${t.text}${t.note ? html`<br />${t.note}` : nothing}</span>`)}
        <label class="cur"><select aria-label="Para birimi"><option>USD</option></select>${icon("down", 20)}</label>
      </div>
      <div class="times">
        ${hours.map((h) => html`<span class="t" style=${styleMap({ left: `${hourX(h)}px` })}>${String(h).padStart(2, "0")}:00</span>`)}
        <span class="now" style=${styleMap({ left: `${hourX(14.66)}px` })}><span>Pzt 10 Kas '25</span><span>14:40</span></span>
      </div>
      <button class="corner" aria-label="Eksen ayarları">${icon("gearSmall", 22)}</button>
      <div class="ranges">
        ${["1G", "5G", "1A", "3A", "6A", "Bu sene", "1Y", "5Y", "Tümü"].map((r) => html`<button>${r}</button>`)}
        <span class="sep"></span>
        <button aria-label="Tarihe git">${icon("goto")}</button>
        <span class="grow"></span>
        <span>15:14:44 UTC+1</span>
      </div>
    </section>`;
  }

  private taskbar() {
    return html`<footer class="task"><div class="bar">
      <button class="weather">
        <svg width="20" height="20" viewBox="0 0 20 20"><path d="M2 11q1-6 8-6t8 6q-2-1.500-4 0-2-1.500-4 0-2-1.500-4 0-2-1.500-4 0z" fill="#5aa9e0"/><path d="M10 10v6q-.5 2-2.500 1" fill="none" stroke="#5b6470" stroke-width="1.300"/></svg>
        <span class="count">8</span><span>Hafif yağmur<small>Gece</small></span>
      </button>
      <button aria-label="Başlat"><svg width="20" height="20" viewBox="0 0 20 20"><path d="M0 0h9.500v9.500H0zM10.500 0H20v9.500h-9.500zM0 10.500h9.500V20H0zM10.500 10.500H20V20h-9.500z" fill="#1f9fe0"/></svg></button>
      <label class="find">${icon("search")}<input type="text" placeholder="Ara" aria-label="Ara" /></label>
      <div class="apps">${apps.map((a) => html`<button class="app" aria-label=${a.name}><svg width="22" height="22" viewBox="0 0 24 24">${a.art}</svg></button>`)}</div>
      <span class="grow"></span>
      <button class="tray" aria-label="Gizli simgeler">${icon("up")}</button>
      <button class="tray" aria-label="Ekran"><svg width="14" height="14" viewBox="0 0 14 14"><rect width="14" height="14" fill="#2c3a2c"/><path d="M1 3h12" stroke="#a8644e" stroke-width="2"/><path d="M1 6.500h12" stroke="#8f8a4e" stroke-width="2"/><path d="M1 10h12" stroke="#4f8a5a" stroke-width="2"/></svg></button>
      <button class="tray" aria-label="Güncelleme"><svg width="16" height="16" viewBox="0 0 16 16" fill="none" stroke="#2e2a26"><path d="M2 6q3-6 9-3.500l2 2M13.500 1.500v3.500H10M2.500 10q1 4 5 4M1.500 13.500V10H5"/><circle cx="11.500" cy="11.500" r="3.500" fill="#1f74c8" stroke="none"/></svg></button>
      <button class="tray" aria-label="Mikrofon">${icon("mic")}</button>
      <button class="lang">TUR</button>
      <button class="tray slim" aria-label="Ağ">${icon("wifi")}</button>
      <button class="tray slim" aria-label="Ses">${icon("volume")}</button>
      <button class="tray slim" aria-label="Pil">${icon("battery")}</button>
      <time class="clock">17:14<br />10.11.2025</time>
    </div></footer>`;
  }

  render() {
    return html`${this.chromeRows()}${this.header()}
      <main class="body">
        ${this.toolRail()}
        <div class="center">
          ${this.chart()}
          <section class="panel">
            <button>Pine Editörü</button><button>İşlem Paneli</button><span class="grow"></span>
            <span class="ends"><button aria-label="Paneli aç">${icon("chevUp")}</button><button aria-label="Büyüt">${icon("maximize")}</button></span>
          </section>
        </div>
        ${this.sideRail()}
      </main>
      ${this.taskbar()}`;
  }
}
